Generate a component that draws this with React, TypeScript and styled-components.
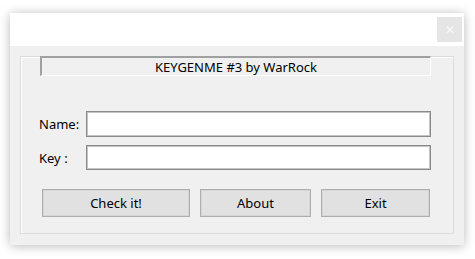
import React from "react";
import styled, { createGlobalStyle } from "styled-components";

const GlobalStyle = createGlobalStyle`
  html, body {
    margin: 0;
    padding: 0;
    background: #ffffff;
  }
  body {
    font-family: "Noto Sans", "Open Sans", sans-serif;
    font-size: 13px;
    color: #000;
  }
`;

const Page = styled.div`
  width: 475px;
  height: 259px;
  padding: 13px 0 0 10px;
  box-sizing: border-box;
`;

const Window = styled.div`
  width: 454px;
  height: 232px;
  display: flex;
  flex-direction: column;
  background: #f0f0f0;
  box-shadow: 0 1px 10px rgba(0, 0, 0, 0.28);
`;

const TitleBar = styled.div`
  height: 33px;
  background: #ffffff;
  display: flex;
  justify-content: flex-end;
  align-items: flex-start;
  padding: 4px 2px 0 0;
  box-sizing: border-box;
`;

const CloseButton = styled.div`
  width: 25px;
  height: 25px;
  background: #e5e5e5;
  color: #f8f8f8;
  display: flex;
  align-items: center;
  justify-content: center;
  font-size: 12px;
  line-height: 1;
`;

const Body = styled.div`
  flex: 1;
  padding: 10px 10px 11px 10px;
  display: flex;
`;

const GroupBox = styled.div`
  flex: 1;
  border: 1px solid #dcdcdc;
  box-shadow: inset 1px 1px 0 #ffffff;
  display: flex;
  flex-direction: column;
`;

const Caption = styled.div`
  margin: -1px 0 0 19px;
  width: 391px;
  height: 20px;
  box-sizing: border-box;
  border-top: 2px solid #a0a0a0;
  border-left: 2px solid #a0a0a0;
  border-bottom: 1px solid #ffffff;
  border-right: 1px solid #ffffff;
  display: flex;
  align-items: center;
  justify-content: center;
`;

const Row = styled.div<{ $top: number }>`
  display: flex;
  align-items: center;
  margin: ${(p) => p.$top}px 0 0 18px;
`;

const Label = styled.div`
  width: 47px;
`;

const Field = styled.div<{ $h: number }>`
  width: 345px;
  height: ${(p) => p.$h}px;
  box-sizing: border-box;
  background: #ffffff;
  border: 1px solid #8a8a8a;
  box-shadow: inset 0 0 0 1px #c4c4c4;
`;

const ButtonRow = styled.div`
  display: flex;
  gap: 10px;
  margin: 19px 0 0 21px;
`;

const Button = styled.div<{ $w: number }>`
  width: ${(p) => p.$w}px;
  height: 28px;
  box-sizing: border-box;
  background: #e1e1e1;
  border: 1px solid #adadad;
  box-shadow: inset 0 0 0 1px #d6d6d6;
  display: flex;
  align-items: center;
  justify-content: center;
`;

export default function App() {
  return (
    <Page>
      <GlobalStyle />
      <Window>
        <TitleBar>
          <CloseButton>✕</CloseButton>
        </TitleBar>
        <Body>
          <GroupBox>
            <Caption>KEYGENME #3 by WarRock</Caption>
            <Row $top={35}>
              <Label>Name:</Label>
              <Field $h={26} />
            </Row>
            <Row $top={8}>
              <Label>Key :</Label>
              <Field $h={25} />
            </Row>
            <ButtonRow>
              <Button $w={148}>Check it!</Button>
              <Button $w={111}>About</Button>
              <Button $w={109}>Exit</Button>
            </ButtonRow>
          </GroupBox>
        </Body>
      </Window>
    </Page>
  );
}
